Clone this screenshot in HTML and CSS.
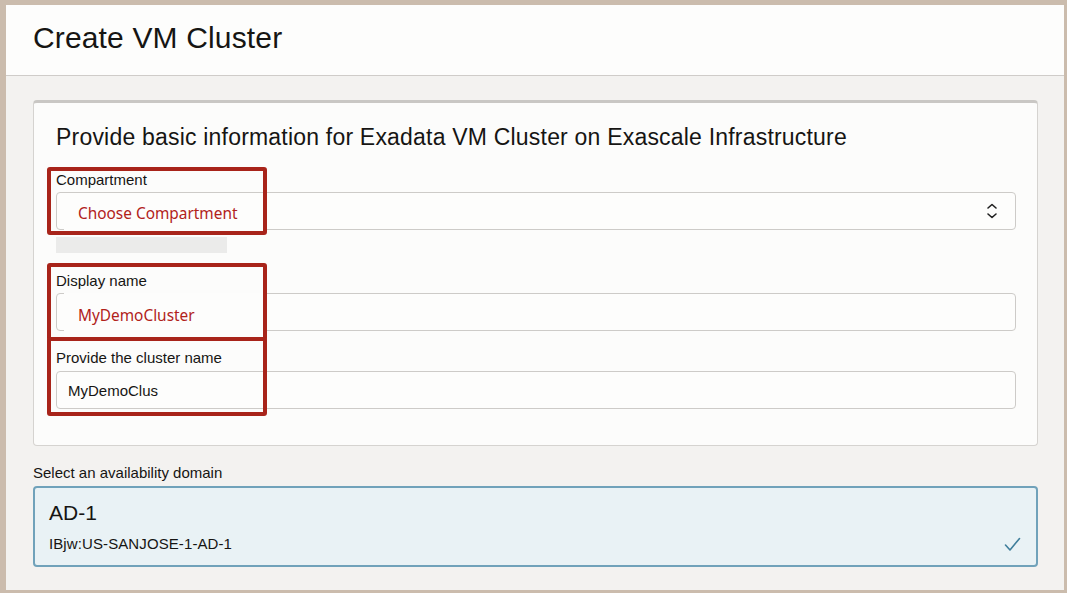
FILE: index.html
```html
<!DOCTYPE html>
<html lang="en">
<head>
<meta charset="utf-8">
<title>Create VM Cluster</title>
<link rel="stylesheet" href="styles.css">
</head>
<body>
<div class="frame">
  <header class="header">
    <h1 class="title">Create VM Cluster</h1>
  </header>
  <main class="content">
    <section class="panel">
      <h2 class="panel-title">Provide basic information for Exadata VM Cluster on Exascale Infrastructure</h2>

      <div class="field">
        <label class="label">Compartment</label>
        <div class="input select">
          <span class="value"></span>
          <svg class="chevrons" width="12" height="16" viewBox="0 0 12 16" aria-hidden="true">
            <polyline points="2,5 6,1.5 10,5" fill="none" stroke="#1f1f1f" stroke-width="1.6" stroke-linecap="round" stroke-linejoin="round"/>
            <polyline points="2,11 6,14.5 10,11" fill="none" stroke="#1f1f1f" stroke-width="1.6" stroke-linecap="round" stroke-linejoin="round"/>
          </svg>
        </div>
        <div class="skeleton"></div>
      </div>

      <div class="field field-gap">
        <label class="label">Display name</label>
        <div class="input"><span class="value"></span></div>
      </div>

      <div class="field field-gap2">
        <label class="label label-2">Provide the cluster name</label>
        <div class="input"><span class="value">MyDemoClus</span></div>
      </div>

      <div class="annot annot-1"><span class="annot-text annot-text-1">Choose Compartment</span></div>
      <div class="annot annot-2"><span class="annot-text annot-text-2">MyDemoCluster</span></div>
      <div class="annot annot-3"></div>
    </section>

    <div class="ad-label">Select an availability domain</div>
    <div class="ad-card">
      <div class="ad-name">AD-1</div>
      <div class="ad-row">
        <span class="ad-id">IBjw:US-SANJOSE-1-AD-1</span>
        <svg class="check" width="17" height="15" viewBox="0 0 17 15" aria-hidden="true">
          <polyline points="1.5,8 6,13 15.5,1.5" fill="none" stroke="#3f7e9b" stroke-width="1.6" stroke-linecap="round" stroke-linejoin="round"/>
        </svg>
      </div>
    </div>
  </main>
</div>
</body>
</html>
```

FILE: styles.css
```css
* { box-sizing: border-box; }
html, body { margin: 0; padding: 0; }
body {
  background: #cbbcad;
  font-family: "Liberation Sans", Arial, Helvetica, sans-serif;
  color: #161513;
  width: 1067px;
  height: 593px;
  overflow: hidden;
}
.frame {
  margin: 5px 3px 0 6px;
  height: 585px;
  display: flex;
  flex-direction: column;
  background: #f3f2f0;
}
.header {
  height: 71px;
  background: #fdfdfc;
  border-bottom: 1px solid #cfccc9;
  padding-left: 27px;
  display: flex;
  align-items: flex-start;
}
.title {
  margin: 16px 0 0 0;
  font-weight: normal;
  font-size: 30px;
  line-height: 34px;
  letter-spacing: 0.15px;
  color: #161513;
}
.content {
  padding: 24px 26px 0 27px;
}
.panel {
  position: relative;
  background: #fcfcfb;
  border: 1px solid #d5d3d0;
  border-top: 3px solid #c9c7c4;
  border-radius: 4px;
  padding: 21px 21px 37px 22px;
  height: 346px;
}
.panel-title {
  margin: 0;
  font-weight: normal;
  font-size: 23px;
  line-height: 26px;
  letter-spacing: 0.2px;
  color: #161513;
}
.field { margin-top: 21px; }
.field-gap { margin-top: 19px; }
.field-gap2 { margin-top: 18px; }
.label {
  display: block;
  font-size: 15px;
  line-height: 18px;
  color: #161513;
  margin-bottom: 3px;
}
.label-2 { margin-bottom: 4px; }
.input {
  height: 38px;
  border: 1px solid #cdcbc8;
  border-radius: 4px;
  background: #fdfdfc;
  display: flex;
  align-items: center;
  padding: 0 17px 0 11px;
}
.value {
  flex: 1;
  font-size: 15px;
  color: #161513;
}
.chevrons { display: block; }
.skeleton {
  margin-top: 7px;
  width: 171px;
  height: 16px;
  background: #ebebea;
}
.annot {
  position: absolute;
  left: 13px;
  width: 220px;
  border: 4px solid #a8241a;
  border-radius: 3px;
}
.annot-1 { top: 64px; height: 68px; }
.annot-2 { top: 160px; height: 78px; }
.annot-3 { top: 234px; height: 79px; }
.annot-text {
  position: absolute;
  left: 13px;
  right: 0;
  bottom: 0;
  background: #fdfdfc;
  color: #b1221a;
  font-family: "Noto Sans", "Open Sans", sans-serif;
  font-size: 15.4px;
  display: flex;
  align-items: center;
  padding-left: 14px;
}
.annot-text-1 { top: 24px; }
.annot-text-2 { top: 26px; }
.ad-label {
  margin-top: 18px;
  font-size: 15px;
  line-height: 18px;
  color: #161513;
}
.ad-card {
  margin-top: 4px;
  height: 81px;
  background: #e9f2f5;
  border: 2px solid #70a2ba;
  border-radius: 4px;
  padding: 13px 15px 0 14px;
}
.ad-name {
  font-size: 21px;
  line-height: 24px;
  color: #161513;
}
.ad-row {
  margin-top: 10px;
  display: flex;
  align-items: center;
  justify-content: space-between;
}
.ad-id {
  font-size: 15px;
  line-height: 18px;
  letter-spacing: 0.1px;
  color: #161513;
}
.check { display: block; }
```
